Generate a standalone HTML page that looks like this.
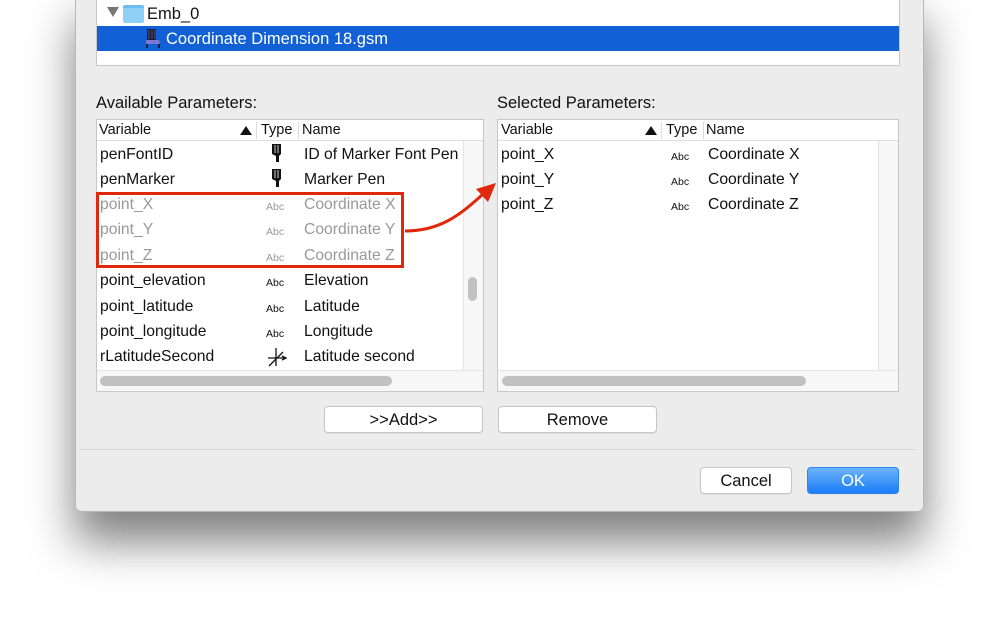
<!DOCTYPE html>
<html><head><meta charset="utf-8"><style>
*{margin:0;padding:0;box-sizing:border-box}
body{width:999px;height:619px;background:#fff;position:relative;overflow:hidden;font-family:"Liberation Sans",Helvetica,Arial,sans-serif;color:#111}
.win{position:absolute;left:75px;top:-10px;width:849px;height:522px;background:#ececec;border-radius:0 0 6px 6px;box-shadow:0 30px 45px rgba(0,0,0,.5);border:1px solid #b8b8b8}
.a{position:absolute;white-space:nowrap}
.box{position:absolute;background:#fff;border:1px solid #c8c8c8}
.t{font-size:15.7px;position:absolute;white-space:nowrap}
.h{font-size:14.5px;position:absolute;white-space:nowrap}
.g{color:#999}
.abc{font-size:10.5px;position:absolute}
.btn{position:absolute;background:#fff;border:1px solid #c6c6c6;border-radius:4px;font-size:16.5px;text-align:center;line-height:27px;box-shadow:0 1px 0 rgba(0,0,0,.05)}
</style></head><body>
<div class="win"></div>
<!-- tree -->
<div class="box" style="left:96px;top:-2px;width:804px;height:68px"></div>
<div class="a" style="left:107px;top:7px;width:0;height:0;border-left:6px solid transparent;border-right:6px solid transparent;border-top:10px solid #777"></div>
<div class="a" style="left:123px;top:5px;width:21px;height:18px;background:#8fd0f6;border-radius:2px;border-top:3px solid #6cbdf0"></div>
<div class="t" style="left:147px;top:5px;font-size:16.5px">Emb_0</div>
<div class="a" style="left:97px;top:26px;width:802px;height:25px;background:#1160d6"></div>
<svg class="a" style="left:144px;top:28px" width="18" height="21"><path d="M3 1h9v11H3z" fill="#1a1a40"/><path d="M5 2v9M8 2v9M11 2v9" stroke="#777" stroke-width=".7"/><path d="M2 12h13l1 4H2z" fill="#7a7ad0"/><path d="M3 16v4M15 16v4" stroke="#111" stroke-width="1.5"/></svg>
<div class="t" style="left:166px;top:30px;font-size:16.5px;color:#fff">Coordinate Dimension 18.gsm</div>

<div class="t" style="left:96px;top:94px;font-size:16.5px">Available Parameters:</div>
<div class="t" style="left:497px;top:94px;font-size:16.5px">Selected Parameters:</div>

<!-- left table -->
<div class="box" style="left:96px;top:119px;width:388px;height:273px"></div>
<div class="a" style="left:97px;top:140px;width:386px;height:1px;background:#ddd"></div>
<div class="h" style="left:99px;top:122px">Variable</div>
<div class="a" style="left:240px;top:126px;border-left:6px solid transparent;border-right:6px solid transparent;border-bottom:9px solid #111"></div>
<div class="a" style="left:256px;top:122px;width:1px;height:17px;background:#ddd"></div>
<div class="h" style="left:261px;top:122px">Type</div>
<div class="a" style="left:298px;top:122px;width:1px;height:17px;background:#ddd"></div>
<div class="h" style="left:302px;top:122px">Name</div>
<div class="a" style="left:463px;top:141px;width:20px;height:229px;background:#f7f7f7;border-left:1px solid #e4e4e4"></div>
<div class="a" style="left:468px;top:277px;width:9px;height:24px;background:#c1c1c1;border-radius:5px"></div>
<div class="a" style="left:97px;top:370px;width:386px;height:21px;background:#f7f7f7;border-top:1px solid #e4e4e4"></div>
<div class="a" style="left:100px;top:376px;width:292px;height:10px;background:#c1c1c1;border-radius:5px"></div>

<div class="t" style="left:100px;top:146px">penFontID</div>
<svg class="a" style="left:270px;top:143px" width="14" height="21"><path d="M2 1h9v10l-2 2v6h-3v-6l-4-2z" fill="#111"/><path d="M5 2v8M8 2v8" stroke="#fff" stroke-width=".8"/></svg>
<div class="t" style="left:304px;top:146px">ID of Marker Font Pen</div>
<div class="t" style="left:100px;top:171px">penMarker</div>
<svg class="a" style="left:270px;top:168px" width="14" height="21"><path d="M2 1h9v10l-2 2v6h-3v-6l-4-2z" fill="#111"/><path d="M5 2v8M8 2v8" stroke="#fff" stroke-width=".8"/></svg>
<div class="t" style="left:304px;top:171px">Marker Pen</div>
<div class="t g" style="left:100px;top:196px">point_X</div><div class="abc g" style="left:266px;top:201px">Abc</div><div class="t g" style="left:304px;top:196px">Coordinate X</div>
<div class="t g" style="left:100px;top:221px">point_Y</div><div class="abc g" style="left:266px;top:226px">Abc</div><div class="t g" style="left:304px;top:221px">Coordinate Y</div>
<div class="t g" style="left:100px;top:247px">point_Z</div><div class="abc g" style="left:266px;top:252px">Abc</div><div class="t g" style="left:304px;top:247px">Coordinate Z</div>
<div class="t" style="left:100px;top:272px">point_elevation</div><div class="abc" style="left:266px;top:277px">Abc</div><div class="t" style="left:304px;top:272px">Elevation</div>
<div class="t" style="left:100px;top:298px">point_latitude</div><div class="abc" style="left:266px;top:303px">Abc</div><div class="t" style="left:304px;top:298px">Latitude</div>
<div class="t" style="left:100px;top:323px">point_longitude</div><div class="abc" style="left:266px;top:328px">Abc</div><div class="t" style="left:304px;top:323px">Longitude</div>
<div class="t" style="left:100px;top:348px">rLatitudeSecond</div>
<svg class="a" style="left:266px;top:346px" width="22" height="22"><path d="M10 2v18M2 12h18M3 20L17 6M16 10l4 2-4 2" stroke="#111" stroke-width="1.3" fill="none"/></svg>
<div class="t" style="left:304px;top:348px">Latitude second</div>

<!-- red box and arrow -->
<div class="a" style="left:96px;top:192px;width:308px;height:76px;border:3px solid #e0280c"></div>
<svg class="a" style="left:400px;top:175px" width="100" height="70"><path d="M5 56 C40 56 60 40 82 20" stroke="#e0280c" stroke-width="3" fill="none"/><path d="M96 8 L76 14 L88 27z" fill="#e0280c"/></svg>

<!-- right table -->
<div class="box" style="left:497px;top:119px;width:402px;height:273px"></div>
<div class="a" style="left:498px;top:140px;width:400px;height:1px;background:#ddd"></div>
<div class="h" style="left:501px;top:122px">Variable</div>
<div class="a" style="left:645px;top:126px;border-left:6px solid transparent;border-right:6px solid transparent;border-bottom:9px solid #111"></div>
<div class="a" style="left:661px;top:122px;width:1px;height:17px;background:#ddd"></div>
<div class="h" style="left:666px;top:122px">Type</div>
<div class="a" style="left:703px;top:122px;width:1px;height:17px;background:#ddd"></div>
<div class="h" style="left:706px;top:122px">Name</div>
<div class="a" style="left:878px;top:141px;width:20px;height:229px;background:#f7f7f7;border-left:1px solid #e4e4e4"></div>
<div class="a" style="left:498px;top:370px;width:400px;height:21px;background:#f7f7f7;border-top:1px solid #e4e4e4"></div>
<div class="a" style="left:502px;top:376px;width:304px;height:10px;background:#c1c1c1;border-radius:5px"></div>
<div class="t" style="left:501px;top:146px">point_X</div><div class="abc" style="left:671px;top:151px">Abc</div><div class="t" style="left:708px;top:146px">Coordinate X</div>
<div class="t" style="left:501px;top:171px">point_Y</div><div class="abc" style="left:671px;top:176px">Abc</div><div class="t" style="left:708px;top:171px">Coordinate Y</div>
<div class="t" style="left:501px;top:196px">point_Z</div><div class="abc" style="left:671px;top:201px">Abc</div><div class="t" style="left:708px;top:196px">Coordinate Z</div>

<div class="btn" style="left:324px;top:406px;width:159px;height:27px">&gt;&gt;Add&gt;&gt;</div>
<div class="btn" style="left:498px;top:406px;width:159px;height:27px">Remove</div>
<div class="a" style="left:80px;top:449px;width:836px;height:1px;background:#d6d6d6"></div>
<div class="btn" style="left:700px;top:467px;width:92px;height:27px">Cancel</div>
<div class="btn" style="left:807px;top:467px;width:92px;height:27px;color:#fff;border-color:#2b86f5;background:linear-gradient(#6cb3fa,#1a7cf7)">OK</div>
</body></html>
